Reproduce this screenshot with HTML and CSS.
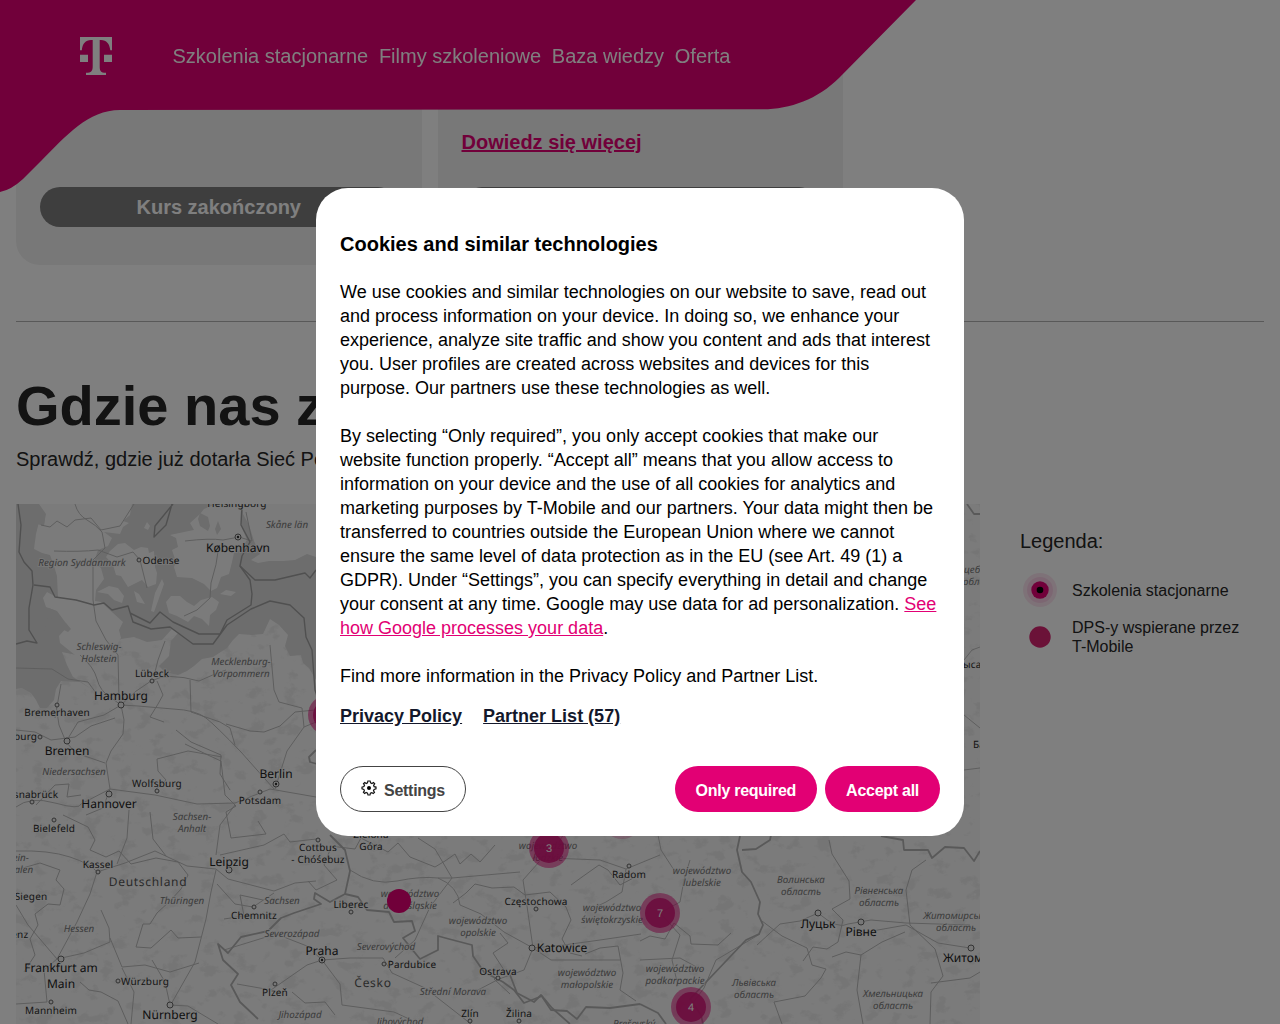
FILE: index.html
```html
<!DOCTYPE html>
<html lang="pl">
<head>
<meta charset="utf-8">
<title>Sieć Pokoleń</title>
<link rel="stylesheet" href="styles.css">
</head>
<body>
<header class="header">
  <svg class="header-shape" viewBox="0 0 920 194" aria-hidden="true"><path d="M0 0H916L839 78C818 99 790 109.300 763 109.300L120 110C88 110 66 136 42 160L23 179Q11 190 0 192Z"/></svg>
  <div class="header-row">
    <svg class="logo" viewBox="0 0 32 38" aria-label="T-Mobile"><path d="M0 0H32V13.300H30.300C29.500 6.500 26.500 3.200 21 3H19.700V29C19.700 34 20.500 35.700 26 35.800V38H6V35.800C11.500 35.700 12.700 34 12.700 29V3H11C5.500 3.200 2.500 6.500 1.800 13.300H0ZM0 17.700H8V25H0ZM24 17.700H32V25H24Z"/></svg>
    <nav class="nav"><a>Szkolenia stacjonarne</a><a>Filmy szkoleniowe</a><a>Baza wiedzy</a><a>Oferta</a></nav>
  </div>
</header>
<main class="page">
  <section class="cards">
    <article class="card"><span class="button-done">Kurs zakończony</span></article>
    <article class="card"><a class="more">Dowiedz się więcej</a><span class="button-done">Kurs zakończony</span></article>
  </section>
  <hr class="rule">
  <section class="where">
    <h1>Gdzie nas znajdziesz</h1>
    <p class="lead">Sprawdź, gdzie już dotarła Sieć Pokoleń</p>
    <div class="where-row">
      <svg class="map" viewBox="16 504 964 520">
        <defs>
          <filter id="relief" x="0" y="0" width="100%" height="100%"><feTurbulence type="fractalNoise" baseFrequency=".06 .08" numOctaves="5" seed="8"/><feColorMatrix values="0 0 0 0 .7  0 0 0 0 .7  0 0 0 0 .7  7 0 0 0 -3.900"/></filter>
        </defs>
        <rect class="land" x="16" y="504" width="964" height="520"/>
        <rect x="16" y="504" width="964" height="520" filter="url(#relief)" opacity=".4"/>
        <path class="sea" d="M16 504H316V680L309 668 303 663 301 655 290 656 285 646 288 635 279 625 270 619 263 634 252 635 239 634 233 640 227 648 213 657 202 659 194 666 187 671 178 675 165 672 159 666 169 656 171 641 178 633 172 629 162 640 147 642 134 637 121 639 113 645 105 640 76 655 62 652 67 665 73 677 84 684 93 690 80 682 61 681 56 689 54 700 47 708 40 708 36 700 31 693 22 688 16 689Z"/>
        <g class="shore">
          <path d="M39 504L46 514 44 524 39 522 36 534 34 549 42 553 50 555 54 566 57 576 58 598 47 592 43 598 46 607 57 611 68 626 59 636 60 643 75 655 78 662 110 655 121 638 119 630 123 622 112 612 101 602 95 601 96 590 104 579 101 568 94 562 98 550 108 546 112 538 104 532 120 534 123 527 129 523 123 521 130 515 132 504Z"/>
          <path d="M110 551L118 544 125 543 134 550 141 547 148 548 149 553 154 551 155 567 157 573 156 584 148 587 142 580 128 587 121 576 116 575 113 565 106 557Z"/>
          <path d="M170 535L184 532 194 530 190 523 200 514 204 509 216 504H241L242 528 247 540 240 550 234 553 232 562 229 574 221 577 217 588 211 591 204 584 192 578 177 577 174 567 176 562 172 550 178 547 176 538Z"/>
          <path d="M166 602L171 596 180 596 187 602 194 606 201 600 212 597 219 602 216 610 210 615 209 626 205 622 202 619 194 616 188 622 177 616 169 613Z"/>
          <path d="M243 504H316V557L307 554 295 560 283 561 269 561 258 563 251 560 260 554 254 541 249 525 243 514Z"/>
          <path d="M162 579L164 584 158 601 154 612 151 611 155 593ZM109 586L118 588 124 596 122 603 114 600 108 594 97 592Z"/>
          <path d="M220 594L226 590 236 592 231 596ZM134 591L139 594 145 604 137 602ZM147 522l3 4-2 4-4-2Z"/>
        </g>
        <g class="sea"><path d="M49 608l7 3-3 7-8 1-2-7ZM47 623l7-2 2 8-5 6-7-4ZM60 622l6 1 5 6-3 3-8-4ZM200 513l8 4 2 9-2 5-8-5-2-7ZM215 529l3-8 3 8-4 6ZM33 511l5-3 7 10-1 8-7-2Z"/></g>
        <g class="roads">
          <path d="M75 504Q78 515 87 520T102 532L105 548 93 560 93 600 96 621 106 640 118 655 119 700 121 706"/>
          <path d="M41 525L50 527 57 521 67 527 75 520 91 518 101 530 120 526 134 504M54 551Q80 552 98 550L117 557 133 552 140 560 147 588M185 541Q210 538 223 540L239 537 252 541 246 512M219 545Q217 565 211 583L210 598 197 610 184 616"/>
          <path d="M80 655Q94 667 97 679T110 697L121 705 138 706 173 709Q196 710 206 718T241 752L257 770 274 789M121 705Q135 690 151 681T199 681L215 674 226 670M121 705L124 720 123 734 111 751 106 763 110 789"/>
          <path d="M16 730L35 732 51 740 75 737 91 726 115 718M56 705L59 725 66 742 76 753 105 763M67 740L78 722 104 715M104 715L121 705M61 684L55 718M157 681L163 695 158 704 150 717 164 722M155 672L158 660 165 641"/>
          <path d="M270 645L274 690 279 702 302 708 304 727M304 727L287 751 275 789M304 727L316 722M16 668L52 669 68 679 88 682 96 693"/>
          <path d="M16 807Q30 796 55 803T81 804L110 789 155 795 197 804 235 803 270 789 316 797M190 680L191 712 220 722 230 728 235 745M110 789L103 808 86 815M155 790L166 780 158 771 157 759 188 751 211 755 222 757M235 805L220 825 216 855"/>
          <path d="M316 839L290 842 284 834 264 845 220 855M16 851Q49 850 70 857T97 872L125 863 155 851 187 866 216 869M129 810L127 838 117 864M97 872L90 894 77 922 57 959M57 959L28 925 16 905M57 959L84 953 110 942 109 928 101 910"/>
          <path d="M216 869L228 879 274 891 295 883 316 881M216 870L211 892 206 919 195 962 170 1006M110 938L122 967 145 965 170 972 199 963M122 968L134 992 131 1024M170 1005L188 1006 218 1024M170 1005L165 982 152 960M57 959L44 970 47 1002 16 1004"/>
          <path d="M253 907L235 904 217 884M253 907L274 893M322 960L307 965 271 990 237 984M322 960L350 958 383 958 392 973 425 988 471 1024M322 960L340 984 342 1005 394 1012 420 1024M322 960L307 946 276 934 224 950"/>
          <path d="M350 870Q373 886 397 881T438 878L452 878 520 872M438 878Q458 886 460 905M452 878L435 849 418 838M452 878L430 907 415 940 395 958M460 905L481 914 504 932 533 948 564 945 600 940 641 934M533 948L527 906 523 880 547 853M533 948L524 970 499 979 478 990M533 948L551 960 577 960 620 960M550 858L566 830M550 858L600 860 626 869 660 855"/>
          <path d="M626 869L622 892 606 902 585 912M660 913L680 902 684 880 690 860M660 913L680 935 672 960 678 986M640 960L680 958 702 970M690 1007L704 988 716 960 760 934M651 800L661 850 674 870"/>
          <path d="M818 913Q838 930 848 924L871 920 906 923 970 925M818 913L800 921 780 924 757 945M861 933L906 925 938 943 970 948M964 770L980 768M964 715L980 728M964 660L972 650 980 647"/>
          <path d="M330 850L324 865 337 880 316 890 308 881"/>
        </g>
        <g class="regions">
          <path d="M16 870L40 863 60 870 56 880 64 889 60 905 48 904 35 914 38 925 30 939 35 955 24 972M63 815L88 827 95 840 90 850 106 857 119 851 131 864 156 858 178 862 188 875 181 889 170 901 157 913 150 924 143 924 136 947 151 948 171 930 178 938 201 937M150 812L153 839 166 856M36 805L55 785 69 784 67 797 81 795M185 744L210 756 221 761 225 795 236 806 226 812 231 838 266 834 258 821"/>
          <path d="M176 730L191 742 221 755 220 774 230 790M226 724L250 731 264 732 280 726 295 712 315 710M80 982L89 990 101 992 118 1001 128 1024M224 919L244 916 240 895 263 900M292 992L305 1003 325 1002 335 1015"/>
          <path d="M330 846L355 849 361 838 388 852 398 843 410 857 435 867 445 861 455 854 460 864 471 854 480 862 495 845M453 903L466 893 475 884 492 888 514 887 525 895 550 892 566 907 571 920 562 939 570 953 582 956M571 885L582 877 599 865 608 870 620 885 641 874M500 933L508 943 493 953 504 970 494 979 510 994M640 941L650 936 665 939 674 923 690 936 691 944 718 945 731 933M585 954L600 948 618 946 623 973 620 990 636 1001"/>
          <path d="M832 854L849 881 850 899 832 909 843 920 838 942 827 949 813 947 803 961M832 854L829 840M926 860L912 870 906 890 910 925 935 949 943 976 931 992 930 1024M762 921L782 936 807 948 812 965 826 969 821 978 805 996 774 1002 782 1024M905 932L882 942 861 955 846 952 832 957M861 955L857 990 863 1024M931 983L970 978 980 972"/>
        </g>
        <g class="borders sea-borders"><path d="M18 504L21 525 19 552 24 562 32 571 33 585 29 608 29 630 37 643 27 641 16 644M34 585L50 587 55 597 76 600 94 605 104 603 112 610 128 606 133 622 151 629 170 627 193 644 213 644 227 625 251 609 270 601 290 605 304 618 306 637 312 650 315 690 320 705M173 504L155 526 154 537 166 525 172 504M242 504L241 525 250 542 242 556 240 566 250 580 252 594 251 605 227 620 220 634 199 634 173 622 160 612 150 623 130 613"/><path d="M240 566L255 580 275 580 305 573 310 578 316 570"/></g>
        <g class="borders">
          <path d="M316 750L309 757 310 762 317 764M330 835L345 850 350 871 345 894 358 897 367 910 389 912 394 922 412 921 415 931 403 938 411 948 420 959 438 950 438 936 449 939 472 945 473 956 484 972 503 982 514 990 524 1003 542 996 552 1008 570 1024"/>
          <path d="M345 894L330 902 315 893 314 899 321 904 294 913 281 918 268 931 241 937 228 953 218 944 223 960 238 974 231 985 240 1002 258 1019"/>
          <path d="M510 975L517 993 534 1002 541 995 551 1010 567 1011 577 1019 586 1007 610 1008 640 1004M740 836L737 850 742 872 751 882 760 902 758 914 763 925 759 934 746 940 690 999 701 1015 703 1024M742 850L756 849 770 840 772 830M881 836L903 840 904 850 928 850 932 858 945 847 964 848 974 861 980 851M640 1004L658 1013 666 1024M967 504L974 514 980 514"/>
        </g>
        <g class="dots"><circle cx="238" cy="537" r="3"/><circle cx="139" cy="560" r="2"/><circle cx="152" cy="681" r="2"/><circle cx="121" cy="705" r="3"/><circle cx="57" cy="705" r="2"/><circle cx="67" cy="741" r="3"/><circle cx="40" cy="737" r="2"/><circle cx="109" cy="794" r="3"/><circle cx="157" cy="791" r="2"/><circle cx="276" cy="784" r="3"/><circle cx="260" cy="792" r="2"/><circle cx="32" cy="802" r="2"/><circle cx="54" cy="820" r="2"/><circle cx="98" cy="872" r="2"/><circle cx="229" cy="870" r="3"/><circle cx="254" cy="907" r="2"/><circle cx="318" cy="840" r="2"/><circle cx="322" cy="960" r="3"/><circle cx="61" cy="959" r="3"/><circle cx="51" cy="1002" r="2"/><circle cx="118" cy="981" r="2"/><circle cx="170" cy="1005" r="3"/><circle cx="275" cy="984" r="2"/><circle cx="351" cy="912" r="2"/><circle cx="384" cy="964" r="2"/><circle cx="536" cy="909" r="2"/><circle cx="532" cy="948" r="3"/><circle cx="498" cy="978" r="2"/><circle cx="629" cy="866" r="2"/><circle cx="818" cy="913" r="3"/><circle cx="861" cy="922" r="3"/><circle cx="971" cy="948" r="3"/><circle cx="470" cy="1021" r="2"/><circle cx="519" cy="1021" r="2"/></g>
        <g class="capitals"><circle cx="238" cy="537" r="1.200"/><circle cx="276" cy="784" r="1.200"/><circle cx="322" cy="960" r="1.200"/></g>
        <g class="area">
          <text x="287" y="528">Skåne län</text><text x="82" y="566">Region Syddanmark</text><text x="99" y="650">Schleswig-</text><text x="99" y="662">Holstein</text><text x="241" y="665">Mecklenburg-</text><text x="241" y="677">Vorpommern</text><text x="74" y="775">Niedersachsen</text><text x="192" y="820">Sachsen-</text><text x="192" y="832">Anhalt</text><text x="182" y="904">Thüringen</text><text x="282" y="904">Sachsen</text><text x="79" y="932">Hessen</text><text x="292" y="937">Severozápad</text><text x="300" y="1018">Jihozápad</text><text x="386" y="950">Severovýchod</text><text x="453" y="995">Střední Morava</text><text x="400" y="1025">Jihovýchod</text><text x="548" y="849">województwo</text><text x="548" y="861">łódzkie</text><text x="410" y="897">województwo</text><text x="410" y="909">dolnośląskie</text><text x="478" y="924">województwo</text><text x="478" y="936">opolskie</text><text x="612" y="911">województwo</text><text x="612" y="923">świętokrzyskie</text><text x="587" y="976">województwo</text><text x="587" y="988">małopolskie</text><text x="702" y="874">województwo</text><text x="702" y="886">lubelskie</text><text x="675" y="972">województwo</text><text x="675" y="984">podkarpackie</text><text x="634" y="1027">Prešovský</text><text x="801" y="883">Волинська</text><text x="801" y="895">область</text><text x="879" y="894">Рівненська</text><text x="879" y="906">область</text><text x="956" y="919">Житомирська</text><text x="956" y="931">область</text><text x="754" y="986">Львівська</text><text x="754" y="998">область</text><text x="893" y="997">Хмельницька</text><text x="893" y="1009">область</text>
          <text class="from-left" x="964" y="573">цебська</text><text class="from-left" x="963" y="585">область</text><text x="16" y="861">rhein-</text><text x="12" y="873">Westfalen</text>
        </g>
        <g class="town">
          <text x="161" y="564">Odense</text><text x="237" y="507">Helsingborg</text><text x="152" y="677">Lübeck</text><text x="57" y="716">Bremerhaven</text><text x="11" y="740">Oldenburg</text><text x="157" y="787">Wolfsburg</text><text x="32" y="798">Osnabrück</text><text x="260" y="804">Potsdam</text><text x="54" y="832">Bielefeld</text><text x="98" y="868">Kassel</text><text x="31" y="900">Siegen</text><text x="9" y="938">Koblenz</text><text x="254" y="919">Chemnitz</text><text x="318" y="851">Cottbus</text><text x="318" y="863">- Chóśebuz</text><text x="145" y="985">Würzburg</text><text x="51" y="1014">Mannheim</text><text x="275" y="996">Plzeň</text><text x="371" y="838">Zielona</text><text x="371" y="850">Góra</text><text x="351" y="908">Liberec</text><text x="412" y="968">Pardubice</text><text x="536" y="905">Częstochowa</text><text x="498" y="975">Ostrava</text><text x="470" y="1017">Zlín</text><text x="519" y="1017">Žilina</text><text x="629" y="878">Radom</text><text class="from-left" x="963" y="668">ысаў</text><text class="from-left" x="973" y="748">Бабр</text>
        </g>
        <g class="city"><text x="238" y="552">København</text><text x="121" y="700">Hamburg</text><text x="67" y="755">Bremen</text><text x="276" y="778">Berlin</text><text x="109" y="808">Hannover</text><text x="229" y="866">Leipzig</text><text x="61" y="972">Frankfurt am</text><text x="61" y="988">Main</text><text x="170" y="1019">Nürnberg</text><text x="322" y="955">Praha</text><text x="562" y="952">Katowice</text><text x="818" y="928">Луцьк</text><text x="861" y="936">Рівне</text><text class="from-left" x="943" y="962">Житомир</text></g>
        <g class="country"><text x="148" y="886">Deutschland</text><text x="373" y="987">Česko</text></g>
        <g class="pins">
          <g><circle class="ring" cx="328" cy="715" r="20"/><circle class="core" cx="328" cy="715" r="15"/></g>
          <circle class="ring faint" cx="622" cy="819" r="20"/>
          <circle class="pin" cx="399" cy="901" r="12"/>
          <g><circle class="ring" cx="549" cy="848" r="20"/><circle class="core" cx="549" cy="848" r="15"/><text x="549" y="852">3</text></g>
          <g><circle class="ring" cx="660" cy="913" r="20"/><circle class="core" cx="660" cy="913" r="15"/><text x="660" y="917">7</text></g>
          <g><circle class="ring" cx="691" cy="1007" r="20"/><circle class="core" cx="691" cy="1007" r="15"/><text x="691" y="1011">4</text></g>
        </g>
      </svg>
      <aside class="legend">
        <h2>Legenda:</h2>
        <div class="legend-item"><svg viewBox="0 0 40 40"><circle class="halo" cx="20" cy="20" r="17"/><circle class="halo" cx="20" cy="20" r="13"/><circle class="mark" cx="20" cy="20" r="8.700"/><circle cx="20" cy="20" r="3.300"/></svg><span>Szkolenia stacjonarne</span></div>
        <div class="legend-item"><svg viewBox="0 0 40 40"><circle class="mark soft" cx="20" cy="20" r="10.700"/></svg><span>DPS-y wspierane przez T-Mobile</span></div>
      </aside>
    </div>
  </section>
</main>
<div class="overlay">
  <section class="modal" role="dialog" aria-labelledby="consent-title">
    <h2 id="consent-title">Cookies and similar technologies</h2>
    <p>We use cookies and similar technologies on our website to save, read out and process information on your device. In doing so, we enhance your experience, analyze site traffic and show you content and ads that interest you. User profiles are created across websites and devices for this purpose. Our partners use these technologies as well.</p>
    <p>By selecting “Only required”, you only accept cookies that make our website function properly. “Accept all” means that you allow access to information on your device and the use of all cookies for analytics and marketing purposes by T-Mobile and our partners. Your data might then be transferred to countries outside the European Union where we cannot ensure the same level of data protection as in the EU (see Art. 49 (1) a GDPR). Under “Settings”, you can specify everything in detail and change your consent at any time. Google may use data for ad personalization. <a>See how Google processes your data</a>.</p>
    <p>Find more information in the Privacy Policy and Partner List.</p>
    <div class="links"><a>Privacy Policy</a><a>Partner List (57)</a></div>
    <div class="actions">
      <button class="btn btn-outline"><svg viewBox="0 0 16 16"><path d="M6.900 1H9.100L9.600 2.900 10.900 3.500 12.500 2.500 13.700 3.800 12.600 5.300 13.100 6.700 15 7.100V8.900L13.100 9.400 12.500 10.800 13.500 12.400 12.200 13.600 10.800 12.600 9.400 13.100 9 15H7L6.500 13.100 5.100 12.500 3.600 13.500 2.400 12.200 3.400 10.800 2.900 9.400 1 8.900V7.100L2.900 6.600 3.500 5.200 2.500 3.700 3.800 2.500 5.200 3.500 6.500 2.900Z"/><circle cx="8" cy="8" r="2"/></svg>Settings</button>
      <button class="btn btn-main">Only required</button>
      <button class="btn btn-main">Accept all</button>
    </div>
  </section>
</div>
</body>
</html>
```

FILE: styles.css
```css
* { box-sizing: border-box; }
html, body { height: 100%; overflow: hidden; }
body { margin: 0; background: #fff; color: #262626; font-family: "Liberation Sans", Arial, sans-serif; }
h1, h2, p { margin: 0; }

.header { position: fixed; inset: 0 auto auto 0; width: 920px; height: 194px; z-index: 2; }
.header-shape { position: absolute; width: 920px; height: 194px; fill: #e20074; }
.header-row { position: relative; display: flex; align-items: center; gap: 60.5px; height: 112px; padding-left: 80px; }
.logo { width: 32px; height: 38px; fill: #fff; }
.nav { display: flex; gap: 10.7px; color: #fff; font-size: 20px; }

.page { padding: 0 16px; height: 1024px; overflow: hidden; }
.cards { display: flex; gap: 16px; height: 265px; }
.card { width: 405.5px; padding: 0 24px 38px; background: #f1f1f1; border-radius: 0 0 24px 24px; display: flex; flex-direction: column; justify-content: flex-end; }
.more { margin-bottom: 33px; color: #e20074; font-size: 20px; font-weight: 700; line-height: 24px; text-decoration: underline; }
.button-done { height: 40px; border-radius: 20px; background: #7c7c7c; color: #fff; font-size: 20px; font-weight: 700; line-height: 40px; text-align: center; }
.rule { height: 1px; margin: 56px 0 0; border: 0; background: #b3b3b3; }
.where { padding-top: 52px; }
.where h1 { font-size: 56px; line-height: 64px; }
.lead { margin-top: 9px; font-size: 20px; line-height: 24px; }
.where-row { display: flex; margin-top: 33px; gap: 40px; }
.map { width: 964px; height: 520px; flex: none; }
.legend { width: 240px; padding-top: 25px; }
.legend h2 { font-size: 20px; font-weight: 400; line-height: 24px; margin-bottom: 17px; }
.legend-item { display: flex; align-items: center; gap: 12px; height: 40px; margin-bottom: 7px; font-size: 16px; line-height: 19px; }
.legend-item svg { width: 40px; height: 40px; flex: none; }
.legend-item span { width: 176px; }
.halo { fill: #e20074; opacity: .1; }
.mark { fill: #e20074; }
.soft { fill: #d62471; }

.land, .shore { fill: #f7f7f7; }
.sea { fill: #dadada; }
.roads, .regions, .borders, .dots { fill: none; stroke-linejoin: round; }
.roads { stroke: #bdbdbd; stroke-width: 1; }
.regions { stroke: #bababa; stroke-width: 1; }
.borders { stroke: #b3b3b3; stroke-width: 1.8; }
.sea-borders { stroke: #a0a0a0; stroke-width: 1.4; }
.dots { fill: #eee; stroke: #666; stroke-width: 1; }
.capitals { fill: #333; }
.map text { font-family: "Noto Sans", sans-serif; text-anchor: middle; text-rendering: geometricPrecision; paint-order: stroke; stroke: #f5f5f5; stroke-opacity: .7; stroke-width: 2px; }
.map .from-left { text-anchor: start; }
.area text { font-size: 9.8px; font-style: italic; fill: #777; }
.town text { font-size: 10px; letter-spacing: .15px; fill: #2b2b2b; }
.city text { font-size: 12px; fill: #222; }
.country text { font-size: 12px; letter-spacing: .7px; fill: #555; }
.ring { fill: #e20074; opacity: .5; }
.faint { opacity: .2; }
.core { fill: #d6187a; opacity: .9; }
.pin { fill: #e20074; }
.map .pins text { font: 11px "Liberation Sans", sans-serif; fill: #fff; stroke: none; }

.overlay { position: fixed; inset: 0; z-index: 5; display: flex; align-items: center; justify-content: center; background: rgba(0, 0, 0, .5); }
.modal { width: 648px; height: 648px; padding: 44px 24px 24px; border-radius: 32px; background: #fff; color: #000; display: flex; flex-direction: column; }
.modal h2 { margin-bottom: 24px; font-size: 20px; line-height: 24px; }
.modal p { margin-bottom: 24px; font-size: 18px; line-height: 24px; }
.modal p a { color: #e20074; text-decoration: underline; }
.modal p:last-of-type { margin-bottom: 16px; }
.links { display: flex; gap: 21px; color: #14182b; font-size: 18px; font-weight: 700; line-height: 24px; }
.links a { text-decoration: underline; }
.actions { display: flex; gap: 8px; margin-top: auto; }
.btn { height: 46px; padding: 3px 21px 0; border: 0; border-radius: 23px; font: 700 16px "Liberation Sans", Arial, sans-serif; letter-spacing: -.27px; white-space: nowrap; }
.btn-outline { display: flex; align-items: center; margin-right: auto; padding: 3px 20px 0; border: 1px solid #444; background: #fff; color: #444; }
.btn-outline svg { width: 16px; height: 16px; margin: -6px 7px 0 0; fill: none; stroke: #111; stroke-width: 1.2; }
.btn-outline circle { fill: #000; stroke: none; }
.btn-main { background: #e20074; color: #fff; }
```
